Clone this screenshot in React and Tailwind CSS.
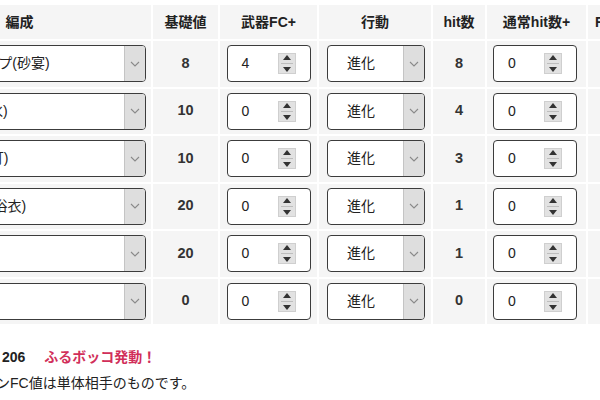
import React from "react";

const rows = [
  { name: "夏アイドルシップ(砂宴)", base: 8, fc: 4, hit: 8 },
  { name: "水着アイドル(水)", base: 10, fc: 0, hit: 4 },
  { name: "夏祭りの町娘(灯)", base: 10, fc: 0, hit: 3 },
  { name: "花火の夜 (夕涼浴衣)", base: 20, fc: 0, hit: 1 },
  { name: "", base: 20, fc: 0, hit: 1 },
  { name: "", base: 0, fc: 0, hit: 0 },
];

function Chevron() {
  return (
    <svg width="10" height="6" viewBox="0 0 10 6">
      <path d="M1 1 L5 5 L9 1" fill="none" stroke="#8a8a8a" strokeWidth="1.1" />
    </svg>
  );
}

function Select({ text, width, center }) {
  return (
    <div
      className="shrink-0 flex h-[37px] rounded-[4px] border-[1.5px] border-[#3c3c3c] bg-white overflow-hidden"
      style={{ width }}
    >
      <div
        className={
          "flex-1 min-w-0 flex items-center whitespace-nowrap overflow-hidden text-[14px] text-[#222] " +
          (center ? "pl-[19px]" : "pl-[6px]")
        }
      >
        {text}
      </div>
      <div className="shrink-0 w-[21px] bg-[#dedede] border-l border-[#c4c4c4] flex items-center justify-center">
        <Chevron />
      </div>
    </div>
  );
}

function Spinner() {
  return (
    <div className="shrink-0 w-[18px] h-[21px] bg-[#e2e2e2] border border-[#cfcfcf] flex flex-col items-center justify-center gap-[3px]">
      <svg width="8" height="5" viewBox="0 0 8 5">
        <path d="M4 0 L8 5 L0 5 Z" fill="#333" />
      </svg>
      <div className="w-[12px] h-px bg-[#bdbdbd]" />
      <svg width="8" height="5" viewBox="0 0 8 5">
        <path d="M0 0 L8 0 L4 5 Z" fill="#333" />
      </svg>
    </div>
  );
}

function NumInput({ value }) {
  return (
    <div className="shrink-0 w-[84px] h-[37px] rounded-[4px] border-[1.5px] border-[#3c3c3c] bg-white flex items-center pl-[14px] pr-[14px]">
      <span className="flex-1 text-[14px] text-[#222]">{value}</span>
      <Spinner />
    </div>
  );
}

const cell = "shrink-0 bg-[#f5f5f5] flex items-center";

export default function App() {
  return (
    <div
      className="w-[600px] h-[400px] overflow-hidden bg-white text-[#222]"
      style={{ fontFamily: '"Liberation Sans", "Noto Sans CJK JP", sans-serif' }}
    >
      <div className="ml-[-112px] w-[840px] pt-[5px] flex flex-col gap-[2px]">
        <div className="flex gap-[2px] h-[34px] font-bold text-[14px] text-[#222]">
          <div className={cell + " w-[263px] justify-center"}>編成</div>
          <div className={cell + " w-[65px] justify-center"}>基礎値</div>
          <div className={cell + " w-[97px] justify-center"}>武器FC+</div>
          <div className={cell + " w-[112px] justify-center"}>行動</div>
          <div className={cell + " w-[52px] justify-center"}>hit数</div>
          <div className={cell + " w-[99px] justify-center"}>通常hit数+</div>
          <div className={cell + " w-[120px] pl-[7px] whitespace-nowrap"}>FC値</div>
        </div>
        {rows.map((r, i) => (
          <div key={i} className="flex gap-[2px] h-[45.5px]">
            <div className={cell + " w-[263px] pl-[6px]"}>
              <Select text={r.name} width={252} />
            </div>
            <div className={cell + " w-[65px] justify-center font-bold text-[14.5px] text-[#333]"}>
              {r.base}
            </div>
            <div className={cell + " w-[97px] justify-center"}>
              <NumInput value={r.fc} />
            </div>
            <div className={cell + " w-[112px] pl-[8px]"}>
              <Select text="進化" width={98} center />
            </div>
            <div className={cell + " w-[52px] justify-center font-bold text-[14.5px] text-[#333]"}>
              {r.hit}
            </div>
            <div className={cell + " w-[99px] pl-[6px]"}>
              <NumInput value={0} />
            </div>
            <div className={cell + " w-[120px]"} />
          </div>
        ))}
      </div>
      <div className="mt-[20px] text-[14px] leading-[26px]">
        <div className="pl-[2px]">
          <span className="font-bold">206</span>
          <span className="font-bold text-[#d12f5a] ml-[19px]">ふるボッコ発動！</span>
        </div>
        <div className="ml-[-4px] whitespace-nowrap">ンFC値は単体相手のものです。</div>
      </div>
    </div>
  );
}
